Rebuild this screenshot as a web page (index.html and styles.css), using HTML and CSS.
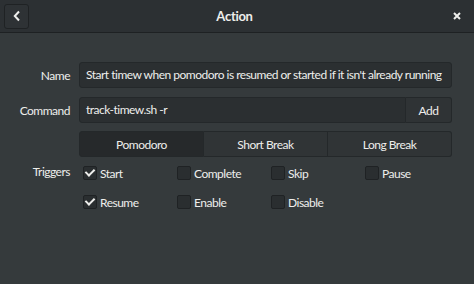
FILE: index.html
```html
<!DOCTYPE html>
<html lang="en">
<head>
<meta charset="UTF-8" />
<title>Action</title>
<link rel="stylesheet" href="styles.css">
</head>
<body>

<div class="window">
  <header class="headerbar">
    <button class="back-btn" aria-label="Back">
      <svg width="10" height="12" viewBox="0 0 10 12"><path d="M7 1.5 L2.8 6 L7 10.5" fill="none" stroke="#eeeeec" stroke-width="2"/></svg>
    </button>
    <div class="title">Action</div>
    <button class="close-btn" aria-label="Close">
      <svg width="10" height="10" viewBox="0 0 10 10"><path d="M2 2 L8 8 M8 2 L2 8" fill="none" stroke="#eeeeec" stroke-width="2"/></svg>
    </button>
  </header>

  <main class="content">
    <div class="form-row">
      <label class="row-label">Name</label>
      <div class="entry">Start timew when pomodoro is resumed or started if it isn't already running</div>
    </div>

    <div class="form-row">
      <label class="row-label">Command</label>
      <div class="linked">
        <div class="entry grow">track-timew.sh -r</div>
        <button class="btn add-btn">Add</button>
      </div>
    </div>

    <div class="form-row">
      <span class="row-label"></span>
      <div class="segmented">
        <button class="seg active">Pomodoro</button>
        <button class="seg">Short Break</button>
        <button class="seg">Long Break</button>
      </div>
    </div>

    <div class="form-row triggers">
      <label class="row-label">Triggers</label>
      <div class="check-grid">
        <span class="check on"><i></i>Start</span>
        <span class="check"><i></i>Complete</span>
        <span class="check"><i></i>Skip</span>
        <span class="check"><i></i>Pause</span>
        <span class="check on"><i></i>Resume</span>
        <span class="check"><i></i>Enable</span>
        <span class="check"><i></i>Disable</span>
      </div>
    </div>
  </main>
</div>

</body>
</html>
```

FILE: styles.css
```css
body {
  margin: 0;
  background: #353a3c;
  color: #eeeeec;
  font-family: Lato, 'Noto Sans', sans-serif;
  font-size: 12px;
  letter-spacing: -0.5px;
}
.window {
  width: 474px;
  height: 284px;
  overflow: hidden;
}
.headerbar {
  height: 32px;
  background: #2c3033;
  border-bottom: 1px solid #1e2123;
  display: flex;
  align-items: center;
  padding: 0 4px;
}
.back-btn {
  width: 25px;
  height: 25px;
  background: #2e3235;
  border: 1px solid #1f2224;
  border-radius: 3px;
  display: flex;
  align-items: center;
  justify-content: center;
  padding: 0;
}
.title {
  flex: 1;
  text-align: center;
  font-weight: bold;
  font-size: 13px;
  letter-spacing: -0.3px;
  margin-right: 4px;
}
.close-btn {
  width: 25px;
  height: 25px;
  background: transparent;
  border: none;
  display: flex;
  align-items: center;
  justify-content: center;
  padding: 0;
  margin-right: 1px;
}
.content {
  padding: 29px 22px 0 0;
  display: flex;
  flex-direction: column;
  gap: 9px;
}
.form-row {
  display: flex;
  align-items: center;
}
.row-label {
  width: 70px;
  text-align: right;
  padding-right: 9px;
  flex: none;
}
.entry {
  flex: 1;
  height: 24px;
  line-height: 24px;
  background: #2b2f31;
  border: 1px solid #24282a;
  border-radius: 3px;
  padding: 0 6px;
  white-space: nowrap;
  overflow: hidden;
}
.linked {
  flex: 1;
  display: flex;
}
.linked .entry {
  border-radius: 3px 0 0 3px;
}
.btn {
  font: inherit;
  letter-spacing: inherit;
  color: inherit;
  background: #2f3335;
  border: 1px solid #24282a;
  border-left: none;
  border-radius: 0 3px 3px 0;
  width: 46px;
  height: 26px;
  padding: 0;
}
.segmented {
  flex: 1;
  display: flex;
  margin-top: -1px;
}
.seg {
  flex: 1;
  font: inherit;
  letter-spacing: inherit;
  color: inherit;
  height: 26px;
  background: #303436;
  border: 1px solid #24282a;
  border-left: none;
  padding: 0;
}
.seg:first-child {
  border-left: 1px solid #24282a;
  border-radius: 3px 0 0 3px;
}
.seg:last-child {
  border-radius: 0 3px 3px 0;
}
.seg.active {
  background: #26292b;
}
.triggers {
  align-items: flex-start;
  margin-top: 0;
}
.triggers .row-label {
  line-height: 14px;
  margin-top: -1px;
}
.check-grid {
  flex: 1;
  display: grid;
  grid-template-columns: repeat(4, 94px);
  row-gap: 15px;
  padding-left: 4px;
}
.check {
  display: flex;
  align-items: center;
  gap: 3px;
  height: 14px;
}
.check i {
  width: 12px;
  height: 12px;
  background: #2a2e30;
  border: 1px solid #1f2224;
  border-radius: 2px;
  position: relative;
}
.check.on i::after {
  content: '';
  position: absolute;
  left: 3px;
  top: 0px;
  width: 4px;
  height: 7px;
  border: solid #eeeeec;
  border-width: 0 2px 2px 0;
  transform: rotate(45deg);
}
```
